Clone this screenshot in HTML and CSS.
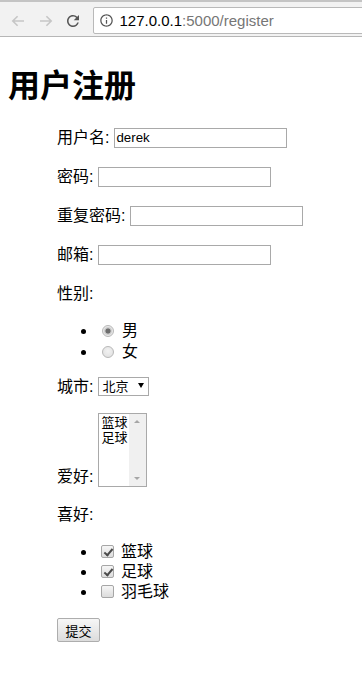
FILE: index.html
```html
<!DOCTYPE html>
<html lang="zh-CN">
<head>
  <meta charset="UTF-8" />
  <meta name="viewport" content="width=device-width, initial-scale=1.0"/>
  <title>用户注册</title>
  <link rel="stylesheet" href="styles.css">
</head>
<body>

  <div class="browser-bar">
    <div class="tab-edge"></div>
    <div class="toolbar">
      <span class="nav-btn">
        <svg width="16" height="16" viewBox="0 0 16 16"><path d="M14 8H2.8M7.6 3.2L2.8 8l4.8 4.8" fill="none" stroke="#c6c6c6" stroke-width="1.6"/></svg>
      </span>
      <span class="nav-btn">
        <svg width="16" height="16" viewBox="0 0 16 16"><path d="M2 8h11.2M8.4 3.2L13.2 8l-4.8 4.8" fill="none" stroke="#c6c6c6" stroke-width="1.6"/></svg>
      </span>
      <span class="nav-btn">
        <svg width="18" height="18" viewBox="0 0 24 24"><path fill="#555" d="M17.65 6.35A7.958 7.958 0 0012 4c-4.42 0-7.99 3.58-7.99 8s3.57 8 7.99 8c3.73 0 6.84-2.55 7.73-6h-2.08A5.99 5.99 0 0112 18c-3.31 0-6-2.69-6-6s2.69-6 6-6c1.66 0 3.14.69 4.22 1.78L13 11h7V4l-2.35 2.35z"/></svg>
      </span>
      <div class="omnibox">
        <svg width="15" height="15" viewBox="0 0 24 24"><path fill="#555" d="M11 7h2v2h-2zm0 4h2v6h-2zm1-9C6.48 2 2 6.48 2 12s4.48 10 10 10 10-4.48 10-10S17.52 2 12 2zm0 18c-4.41 0-8-3.59-8-8s3.59-8 8-8 8 3.59 8 8-3.59 8-8 8z"/></svg>
        <span class="url"><span class="host">127.0.0.1</span>:5000/register</span>
      </div>
    </div>
  </div>

  <div class="page">
    <h1>用户注册</h1>

    <form class="register" action="/register" method="post">
      <p class="row"><label>用户名:</label><input class="field" type="text" name="username" value="derek"></p>
      <p class="row"><label>密码:</label><input class="field" type="password" name="password"></p>
      <p class="row"><label>重复密码:</label><input class="field" type="password" name="password2"></p>
      <p class="row"><label>邮箱:</label><input class="field" type="email" name="email"></p>

      <p class="row"><label>性别:</label></p>
      <ul class="choices genders">
        <li><input class="radio" type="radio" name="gender" value="1" checked><span>男</span></li>
        <li><input class="radio" type="radio" name="gender" value="2"><span>女</span></li>
      </ul>

      <p class="row short">
        <label>城市:</label>
        <span class="select-wrap">
          <select class="city" name="city">
            <option>北京</option>
            <option>上海</option>
          </select>
        </span>
      </p>

      <div class="row tall">
        <label>爱好:</label>
        <div class="listbox" role="listbox" aria-multiselectable="true">
          <div class="options">
            <div class="option" role="option">篮球</div>
            <div class="option" role="option">足球</div>
          </div>
          <div class="scrollbar">
            <span class="arrow up"></span>
            <span class="arrow down"></span>
          </div>
        </div>
      </div>

      <p class="row after-tall"><label>喜好:</label></p>
      <ul class="choices hobbies">
        <li><input class="check" type="checkbox" name="like" value="1" checked><span>篮球</span></li>
        <li><input class="check" type="checkbox" name="like" value="2" checked><span>足球</span></li>
        <li><input class="check" type="checkbox" name="like" value="3"><span>羽毛球</span></li>
      </ul>

      <p class="actions"><button class="submit" type="submit">提交</button></p>
    </form>
  </div>

</body>
</html>
```

FILE: styles.css
```css
body { margin: 0; font-family: "Noto Sans CJK SC", sans-serif; color: #000; background: #fff; }

/* browser chrome */
.browser-bar { height: 38px; overflow: hidden; }
.tab-edge { height: 2px; background: #c4c4c4; }
.toolbar { display: flex; align-items: flex-start; gap: 3.5px; height: 35px; box-sizing: border-box; padding: 5px 0 0 6px; background: #f2f2f2; border-bottom: 1px solid #b6b6b6; }
.nav-btn { width: 24px; height: 27px; display: flex; align-items: center; justify-content: center; }
.omnibox { flex: 1; display: flex; align-items: center; gap: 6px; height: 27px; box-sizing: border-box; margin: 0 -12px 0 4px; padding-left: 5px; background: #fff; border: 1px solid #b9b9b9; border-radius: 2px; }
.url { font: 15px "Liberation Sans", Arial, sans-serif; color: #767676; white-space: nowrap; }
.host { color: #000; }

/* page */
.page { padding: 8px; }
h1 { font-size: 32px; line-height: 37px; margin: 19px 0 24px; font-weight: bold; }
.register { padding-left: 49px; font-family: "Liberation Sans", "Noto Sans CJK SC", sans-serif; font-size: 16px; line-height: 21px; }

/* every block only sets the gap above it */
.row { display: flex; align-items: center; gap: 5px; height: 23px; margin: 16px 0 0; }
.row.short { height: 19px; margin-top: 15px; }
.row.tall { height: 74px; align-items: flex-end; margin-top: 17px; }
.row.after-tall { margin-top: 16px; }

.field { width: 173px; height: 20px; box-sizing: border-box; margin: 0; padding: 1px 1px; border: 1px solid #a9a9a9; border-radius: 0; font: 13.3px "Liberation Sans", Arial, sans-serif; color: #000; }

.choices { margin: 0; padding-left: 40px; }
.genders { margin-top: 15px; line-height: 21px; }
.hobbies { margin-top: 16px; line-height: 20px; }

.radio { appearance: none; width: 12px; height: 12px; margin: 0 8px 0 5px; vertical-align: -1px; border: 1px solid #b8b8b8; border-radius: 50%; box-sizing: border-box; background: radial-gradient(circle at 50% 40%, #f2f2f2, #dedede); }
.radio:checked { background: radial-gradient(circle, #6e6e6e 0 2.2px, #bdbdbd 2.8px, #e8e8e8 4.5px); }

.check { appearance: none; position: relative; width: 13px; height: 13px; margin: 0 7px 0 4px; vertical-align: -1px; border: 1px solid #a6a6a6; border-radius: 2px; box-sizing: border-box; background: linear-gradient(#f6f6f6, #dcdcdc); }
.check:checked::after { content: ""; position: absolute; left: 3.5px; top: 0.5px; width: 3px; height: 7px; border: solid #4a4a4a; border-width: 0 2px 2px 0; transform: rotate(40deg); }

.select-wrap { position: relative; display: inline-block; }
.city { appearance: none; display: block; width: 51px; height: 19px; margin: 0; padding: 0 0 0 3px; border: 1px solid #a9a9a9; border-radius: 0; background: #fff; font: 13px "Liberation Sans", "Noto Sans CJK SC", sans-serif; color: #000; }
.select-wrap::after { content: ""; position: absolute; right: 5px; top: 6px; border-left: 3.5px solid transparent; border-right: 3.5px solid transparent; border-top: 5px solid #000; pointer-events: none; }

.listbox { display: flex; width: 49px; height: 74px; box-sizing: border-box; border: 1px solid #a9a9a9; background: #fff; }
.options { flex: 1; padding: 1px 0 0 2px; font-size: 13px; line-height: 15px; }
.scrollbar { position: relative; width: 17px; background: #f0f0f0; }
.arrow { position: absolute; left: 5px; border-left: 3.5px solid transparent; border-right: 3.5px solid transparent; }
.arrow.up { top: 6px; border-bottom: 3.5px solid #a6a6a6; }
.arrow.down { bottom: 6px; border-top: 3.5px solid #a6a6a6; }

.actions { margin: 16px 0; }
.submit { width: 43px; height: 24px; margin: 0; padding: 0; border: 1px solid #adadad; border-radius: 2px; background: linear-gradient(#f7f7f7, #dcdcdc); font: 13px "Liberation Sans", "Noto Sans CJK SC", sans-serif; color: #000; }
```
